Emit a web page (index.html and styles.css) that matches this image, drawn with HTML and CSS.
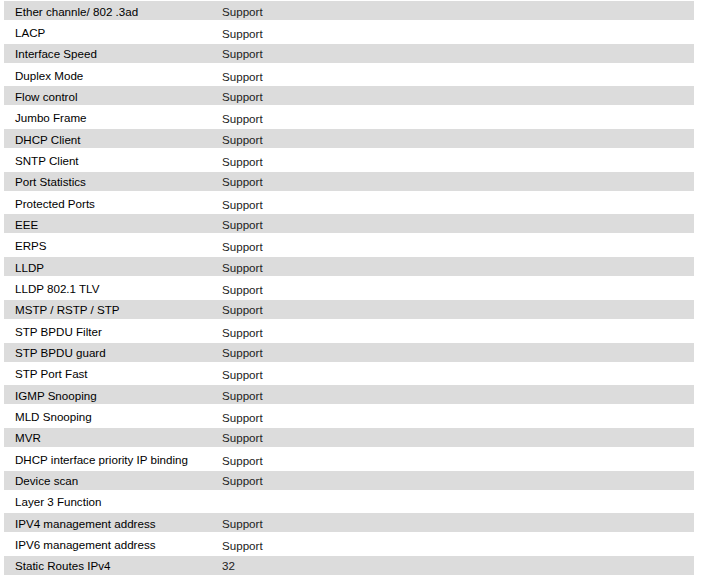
FILE: index.html
```html
<!DOCTYPE html>
<html>
<head>
<meta charset="utf-8">
<link rel="stylesheet" href="styles.css">
</head>
<body>
<div class="spec">
  <div class="row shade"><div class="name">Ether channle/ 802 .3ad</div><div class="val">Support</div></div>
  <div class="row"><div class="name">LACP</div><div class="val">Support</div></div>
  <div class="row shade"><div class="name">Interface Speed</div><div class="val">Support</div></div>
  <div class="row"><div class="name">Duplex Mode</div><div class="val">Support</div></div>
  <div class="row shade"><div class="name">Flow control</div><div class="val">Support</div></div>
  <div class="row"><div class="name">Jumbo Frame</div><div class="val">Support</div></div>
  <div class="row shade"><div class="name">DHCP Client</div><div class="val">Support</div></div>
  <div class="row"><div class="name">SNTP Client</div><div class="val">Support</div></div>
  <div class="row shade"><div class="name">Port Statistics</div><div class="val">Support</div></div>
  <div class="row"><div class="name">Protected Ports</div><div class="val">Support</div></div>
  <div class="row shade"><div class="name">EEE</div><div class="val">Support</div></div>
  <div class="row"><div class="name">ERPS</div><div class="val">Support</div></div>
  <div class="row shade"><div class="name">LLDP</div><div class="val">Support</div></div>
  <div class="row"><div class="name">LLDP 802.1 TLV</div><div class="val">Support</div></div>
  <div class="row shade"><div class="name">MSTP / RSTP / STP</div><div class="val">Support</div></div>
  <div class="row"><div class="name">STP BPDU Filter</div><div class="val">Support</div></div>
  <div class="row shade"><div class="name">STP BPDU guard</div><div class="val">Support</div></div>
  <div class="row"><div class="name">STP Port Fast</div><div class="val">Support</div></div>
  <div class="row shade"><div class="name">IGMP Snooping</div><div class="val">Support</div></div>
  <div class="row"><div class="name">MLD Snooping</div><div class="val">Support</div></div>
  <div class="row shade"><div class="name">MVR</div><div class="val">Support</div></div>
  <div class="row"><div class="name">DHCP interface priority IP binding</div><div class="val">Support</div></div>
  <div class="row shade"><div class="name">Device scan</div><div class="val">Support</div></div>
  <div class="row"><div class="name">Layer 3 Function</div><div class="val"></div></div>
  <div class="row shade"><div class="name">IPV4 management address</div><div class="val">Support</div></div>
  <div class="row"><div class="name">IPV6 management address</div><div class="val">Support</div></div>
  <div class="row shade"><div class="name">Static Routes IPv4</div><div class="val">32</div></div>
</div>
</body>
</html>
```

FILE: styles.css
```css
html, body {
  margin: 0;
  padding: 0;
  background: #ffffff;
}

.spec {
  width: 690px;
  margin: 1px 0 0 4px;
  display: flex;
  flex-direction: column;
  gap: 2.35px;
  font-family: "Liberation Sans", Arial, sans-serif;
  font-size: 11.6px;
}

.row {
  height: 19px;
  display: grid;
  grid-template-columns: 207px 1fr;
  align-items: center;
  padding-top: 1px;
  box-sizing: border-box;
}

.row.shade {
  background: #dcdcdc;
}

.name {
  padding-left: 11px;
  color: #000000;
}

.val {
  padding-left: 11px;
  color: #222222;
}

.row:not(.shade) .val {
  padding-top: 2px;
}
```
